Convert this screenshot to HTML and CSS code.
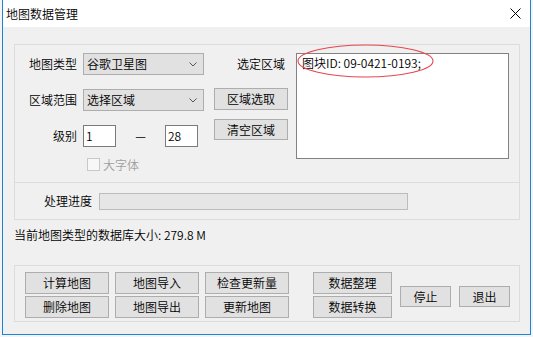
FILE: index.html
```html
<!DOCTYPE html>
<html lang="zh-CN">
<head>
<meta charset="utf-8">
<title>地图数据管理</title>
<link rel="stylesheet" href="styles.css">
</head>
<body>
<div class="desk">
  <div class="win">
    <div class="titlebar">
      <span class="title">地图数据管理</span>
      <svg class="close" width="11" height="11" viewBox="0 0 11 11"><path d="M0.5 0.5 L10.5 10.5 M10.5 0.5 L0.5 10.5" stroke="#000" stroke-width="1" fill="none"/></svg>
    </div>
    <div class="client">
      <div class="group top-group">
        <div class="sec-main">
          <div class="col-left">
            <div class="row">
              <span class="lbl">地图类型</span>
              <div class="combo"><span>谷歌卫星图</span><svg width="8" height="5" viewBox="0 0 8 5"><polyline points="0.5,0.5 4,4 7.5,0.5" fill="none" stroke="#555" stroke-width="1"/></svg></div>
            </div>
            <div class="row r-gap">
              <span class="lbl">区域范围</span>
              <div class="combo"><span>选择区域</span><svg width="8" height="5" viewBox="0 0 8 5"><polyline points="0.5,0.5 4,4 7.5,0.5" fill="none" stroke="#555" stroke-width="1"/></svg></div>
            </div>
            <div class="row r-gap">
              <span class="lbl">级别</span>
              <div class="input">1</div>
              <span class="dash">—</span>
              <div class="input">28</div>
            </div>
            <div class="row-check">
              <span class="check"></span>
              <span class="disabled">大字体</span>
            </div>
          </div>
          <div class="col-mid">
            <div class="lbl-sel">选定区域</div>
            <div class="btn btn-a">区域选取</div>
            <div class="btn btn-b">清空区域</div>
          </div>
          <div class="textarea">
            <span>图块ID: 09-0421-0193;</span>
            <svg class="mark" width="137" height="34" viewBox="0 0 137 34"><ellipse cx="68.5" cy="17" rx="67.5" ry="16" fill="none" stroke="#e6464e" stroke-width="1.1"/></svg>
          </div>
        </div>
        <div class="sec-prog">
          <span class="lbl-prog">处理进度</span>
          <div class="bar"></div>
        </div>
      </div>
      <div class="dbsize">当前地图类型的数据库大小: 279.8 M</div>
      <div class="group btn-group">
        <div class="btn-grid">
          <div class="btn">计算地图</div>
          <div class="btn">地图导入</div>
          <div class="btn">检查更新量</div>
          <div class="btn">删除地图</div>
          <div class="btn">地图导出</div>
          <div class="btn">更新地图</div>
        </div>
        <div class="btn-col">
          <div class="btn">数据整理</div>
          <div class="btn">数据转换</div>
        </div>
        <div class="btn btn-small">停止</div>
        <div class="btn btn-small">退出</div>
      </div>
    </div>
  </div>
</div>
</body>
</html>
```

FILE: styles.css
```css
* { box-sizing: border-box; }
html, body { margin: 0; padding: 0; }
body {
  font-family: "Noto Sans CJK SC", "Microsoft YaHei", sans-serif;
  font-size: 12px;
  font-weight: 350;
  color: #000;
  background: #f4f4f4;
}
.desk {
  width: 533px;
  height: 337px;
  background: #f4f4f4;
  overflow: hidden;
}
.win {
  margin-left: 2px;
  width: 529px;
  height: 335px;
  border-left: 1px solid #1a84d8;
  border-right: 1px solid #1a84d8;
  border-bottom: 1px solid #1a84d8;
  display: flex;
  flex-direction: column;
}
.titlebar {
  height: 27px;
  background: #fff;
  display: flex;
  align-items: center;
  padding-left: 3px;
}
.title { font-size: 12px; line-height: 16px; }
.close { margin-left: auto; margin-right: 9px; display: block; }
.client {
  flex: 1;
  background: #f0f0f0;
  padding: 17px 10px 0 11px;
}
.group { border: 1px solid #dcdcdc; }
.sec-main {
  height: 138px;
  border-bottom: 1px solid #dcdcdc;
  display: flex;
  align-items: flex-start;
  padding-top: 8px;
}
.col-left { width: 189px; display: flex; flex-direction: column; }
.row { display: flex; align-items: center; height: 22px; }
.r-gap { margin-top: 14px; }
.lbl { width: 62px; margin-right: 6px; text-align: right; line-height: 16px; }
.combo {
  width: 121px;
  height: 22px;
  border: 1px solid #adadad;
  background: #e1e1e1;
  display: flex;
  align-items: center;
  justify-content: space-between;
  padding: 0 6px 0 3px;
  line-height: 16px;
}
.combo svg { display: block; }
.input {
  width: 33px;
  height: 22px;
  border: 1px solid #7a7a7a;
  background: #fff;
  padding-left: 2px;
  line-height: 20px;
}
.dash { width: 49px; text-align: center; line-height: 16px; }
.row-check { display: flex; align-items: center; height: 13px; margin-top: 11px; padding-left: 72px; }
.check {
  width: 13px;
  height: 13px;
  border: 1px solid #c8c8c8;
  background: #f7f7f7;
  margin-right: 3px;
}
.disabled { color: #a0a0a0; line-height: 16px; }
.col-mid { width: 74px; margin-left: 10px; display: flex; flex-direction: column; }
.lbl-sel { height: 22px; line-height: 22px; text-align: right; padding-right: 3px; }
.btn {
  height: 22px;
  border: 1px solid #adadad;
  background: #e1e1e1;
  display: flex;
  align-items: center;
  justify-content: center;
  line-height: 16px;
}
.btn-a { margin-top: 13px; }
.btn-b { margin-top: 9px; height: 21px; }
.textarea {
  position: relative;
  margin-left: 8px;
  width: 213px;
  height: 106px;
  border: 1px solid #828282;
  background: #fff;
  padding: 1px 5px;
  line-height: 16px;
}
.mark { position: absolute; left: 0; top: -10px; display: block; }
.sec-prog { height: 36px; display: flex; align-items: center; }
.lbl-prog { width: 77px; margin-right: 7px; text-align: right; line-height: 16px; }
.bar {
  width: 309px;
  height: 17px;
  border: 1px solid #bcbcbc;
  background: #e6e6e6;
}
.dbsize { margin-top: 7px; line-height: 16px; }
.btn-group {
  margin-top: 22px;
  padding: 6px 9px 3px 10px;
  display: flex;
  align-items: flex-start;
}
.btn-grid {
  display: grid;
  grid-template-columns: 84px 84px 84px;
  grid-auto-rows: 22px;
  column-gap: 6px;
  row-gap: 2px;
}
.btn-col {
  width: 79px;
  margin-left: 24px;
  display: flex;
  flex-direction: column;
  gap: 2px;
}
.btn-small { width: 51px; height: 21px; margin-left: 8px; margin-top: 14px; }
```
